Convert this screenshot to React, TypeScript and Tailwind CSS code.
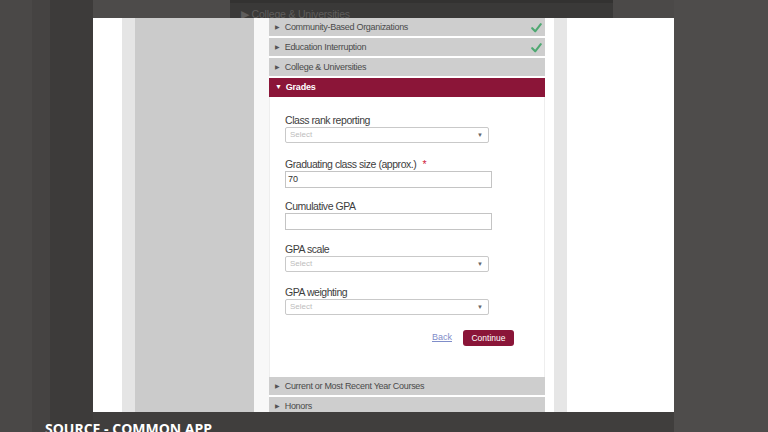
const sans = { fontFamily: '"Liberation Sans", Arial, sans-serif' };

const Check = () => (
  <svg width="11" height="10" viewBox="0 0 11 10" className="mr-[2px]">
    <path d="M1.2 5.2 L4.2 8.3 L9.8 1.2" fill="none" stroke="#4fa872" strokeWidth="2.1" strokeLinecap="round" strokeLinejoin="round" />
  </svg>
);

const Row = ({ label, done }: { label: string; done?: boolean }) => (
  <div className="h-[18px] shrink-0 flex items-center justify-between bg-[#cecece] pl-[6px] pr-[1px] pt-[1px] text-[9px] tracking-[-0.3px] text-[#4a4a4a]">
    <div className="flex items-center">
      <span className="text-[6px] text-[#555] mr-[5px]">▶</span>
      <span>{label}</span>
    </div>
    {done && <Check />}
  </div>
);

const SelectBox = () => (
  <div className="w-[204px] h-[16px] border border-[#c9c9c9] rounded-[2px] bg-white flex items-center justify-between pl-[4px] pr-[5px]">
    <span className="text-[8px] text-[#bdbdbd]">Select</span>
    <span className="text-[6px] text-[#666]">▼</span>
  </div>
);

const TextBox = ({ value }: { value?: string }) => (
  <div className="w-[207px] h-[17px] border border-[#c4c4c4] bg-white flex items-center pl-[2px] text-[9px] text-[#333]">
    {value}
  </div>
);

const Field = ({ label, mt, required, children }: { label: string; mt: string; required?: boolean; children: React.ReactNode }) => (
  <div className={mt}>
    <div className="h-[14px] leading-[14px] text-[10.5px] tracking-[-0.45px] text-[#3d3d3d]">
      {label}
      {required && <span className="text-[#d0243c] ml-[6px]">*</span>}
    </div>
    {children}
  </div>
);

export default function App() {
  return (
    <div className="relative w-[768px] h-[432px] overflow-hidden flex bg-[#4a4847]">
      {/* backdrop columns */}
      <div className="w-[32px] shrink-0 bg-[#4a4847]" />
      <div className="w-[18px] shrink-0 bg-[#454342]" />
      <div className="w-[43px] shrink-0 bg-[#3d3b3a]" />

      <div className="w-[581px] shrink-0 flex flex-col">
        {/* blurred strip above the screenshot */}
        <div className="h-[18px] shrink-0 flex">
          <div className="w-[137px] bg-[#4d4b4a]" />
          <div className="w-[383px] bg-[#3a3938] border-t-[3px] border-[#333231] overflow-hidden pl-[11px] pt-[6px]" style={sans}>
            <div className="leading-none text-[10.5px] tracking-[-0.2px] text-[#5f5d5c]">▶ College &amp; Universities</div>
          </div>
          <div className="flex-1 bg-[#4b4948]" />
        </div>

        {/* the page */}
        <div className="h-[394px] shrink-0 bg-white flex" style={sans}>
          <div className="w-[29px]" />
          <div className="w-[13px] bg-[#e5e5e5]" />
          <div className="w-[119px] bg-[#cbcbcb]" />
          <div className="w-[15px] bg-[#f8f8f8]" />

          <div className="w-[276px] flex flex-col overflow-hidden">
            <Row label="Community-Based Organizations" done />
            <div className="h-[2px] shrink-0" />
            <Row label="Education Interruption" done />
            <div className="h-[2px] shrink-0" />
            <Row label="College & Universities" />
            <div className="h-[2px] shrink-0" />
            <div className="h-[19px] shrink-0 flex items-center bg-[#8b1538] pl-[6px] text-[9px] tracking-[-0.2px] font-bold text-white">
              <span className="text-[7px] mr-[4px]">▼</span>
              <span>Grades</span>
            </div>

            {/* grades form */}
            <div className="h-[280px] shrink-0 border-x border-[#eeeeee] pl-[15px] pt-[16px]">
              <Field label="Class rank reporting" mt="mt-0">
                <SelectBox />
              </Field>
              <Field label="Graduating class size (approx.)" mt="mt-[14px]" required>
                <TextBox value="70" />
              </Field>
              <Field label="Cumulative GPA" mt="mt-[11px]">
                <TextBox />
              </Field>
              <Field label="GPA scale" mt="mt-[12px]">
                <SelectBox />
              </Field>
              <Field label="GPA weighting" mt="mt-[13px]">
                <SelectBox />
              </Field>

              <div className="mt-[15px] flex items-center justify-end pr-[30px] gap-[11px]">
                <a className="text-[9px] text-[#7f8dc9] underline">Back</a>
                <button className="w-[51px] h-[16px] rounded-[3px] bg-[#8a1538] text-white text-[8.5px]">Continue</button>
              </div>
            </div>

            <Row label="Current or Most Recent Year Courses" />
            <div className="h-[2px] shrink-0" />
            <Row label="Honors" />
          </div>

          <div className="w-[9px]" />
          <div className="w-[13px] bg-[#e6e6e6]" />
          <div className="flex-1" />
        </div>

        <div className="flex-1 bg-[#403e3d]" />
      </div>

      <div className="flex-1 bg-[#4e4c4b]" />

      {/* caption overlay */}
      <div className="absolute left-[45px] top-[422px] leading-none text-[14px] font-bold text-white" style={{ fontFamily: '"Open Sans", sans-serif' }}>
        SOURCE - COMMON APP
      </div>
    </div>
  );
}
